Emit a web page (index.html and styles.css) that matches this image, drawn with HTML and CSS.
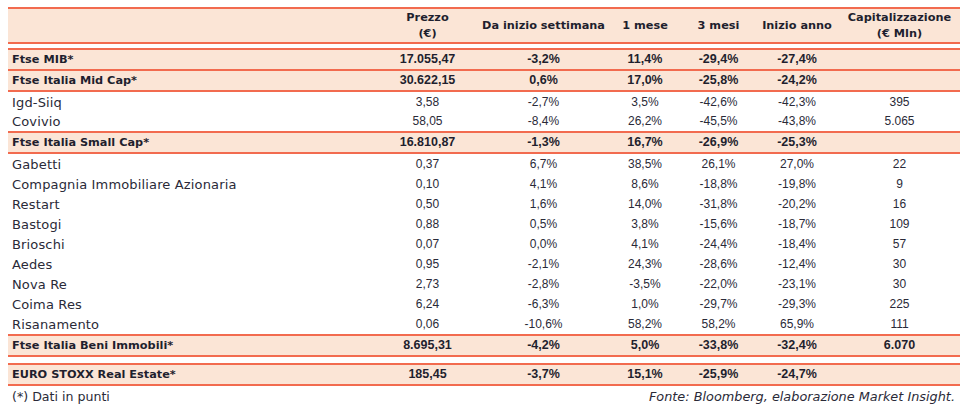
FILE: index.html
```html
<!DOCTYPE html>
<html lang="it">
<head>
<meta charset="utf-8">
<title>Indici e titoli immobiliari</title>
<link rel="stylesheet" href="styles.css">
</head>
<body>
<div class="wrap">
<table class="perf">
  <colgroup>
    <col class="c-name"><col class="c-price"><col class="c-week"><col class="c-m1"><col class="c-m3"><col class="c-ytd"><col class="c-cap">
  </colgroup>
  <thead>
    <tr class="hd">
      <th></th>
      <th>Prezzo<br>(€)</th>
      <th>Da inizio settimana</th>
      <th>1 mese</th>
      <th>3 mesi</th>
      <th>Inizio anno</th>
      <th>Capitalizzazione<br>(€ Mln)</th>
    </tr>
  </thead>
  <tbody>
    <tr class="gap gap-top"><td colspan="7"></td></tr>
    <tr class="idx"><td>Ftse MIB*</td><td>17.055,47</td><td>-3,2%</td><td>11,4%</td><td>-29,4%</td><td>-27,4%</td><td></td></tr>
    <tr class="idx"><td>Ftse Italia Mid Cap*</td><td>30.622,15</td><td>0,6%</td><td>17,0%</td><td>-25,8%</td><td>-24,2%</td><td></td></tr>
    <tr class="st"><td>Igd-Siiq</td><td>3,58</td><td>-2,7%</td><td>3,5%</td><td>-42,6%</td><td>-42,3%</td><td>395</td></tr>
    <tr class="st st-last"><td>Covivio</td><td>58,05</td><td>-8,4%</td><td>26,2%</td><td>-45,5%</td><td>-43,8%</td><td>5.065</td></tr>
    <tr class="idx"><td>Ftse Italia Small Cap*</td><td>16.810,87</td><td>-1,3%</td><td>16,7%</td><td>-26,9%</td><td>-25,3%</td><td></td></tr>
    <tr class="st"><td>Gabetti</td><td>0,37</td><td>6,7%</td><td>38,5%</td><td>26,1%</td><td>27,0%</td><td>22</td></tr>
    <tr class="st"><td>Compagnia Immobiliare Azionaria</td><td>0,10</td><td>4,1%</td><td>8,6%</td><td>-18,8%</td><td>-19,8%</td><td>9</td></tr>
    <tr class="st"><td>Restart</td><td>0,50</td><td>1,6%</td><td>14,0%</td><td>-31,8%</td><td>-20,2%</td><td>16</td></tr>
    <tr class="st"><td>Bastogi</td><td>0,88</td><td>0,5%</td><td>3,8%</td><td>-15,6%</td><td>-18,7%</td><td>109</td></tr>
    <tr class="st"><td>Brioschi</td><td>0,07</td><td>0,0%</td><td>4,1%</td><td>-24,4%</td><td>-18,4%</td><td>57</td></tr>
    <tr class="st"><td>Aedes</td><td>0,95</td><td>-2,1%</td><td>24,3%</td><td>-28,6%</td><td>-12,4%</td><td>30</td></tr>
    <tr class="st"><td>Nova Re</td><td>2,73</td><td>-2,8%</td><td>-3,5%</td><td>-22,0%</td><td>-23,1%</td><td>30</td></tr>
    <tr class="st"><td>Coima Res</td><td>6,24</td><td>-6,3%</td><td>1,0%</td><td>-29,7%</td><td>-29,3%</td><td>225</td></tr>
    <tr class="st"><td>Risanamento</td><td>0,06</td><td>-10,6%</td><td>58,2%</td><td>58,2%</td><td>65,9%</td><td>111</td></tr>
    <tr class="idx"><td>Ftse Italia Beni Immobili*</td><td>8.695,31</td><td>-4,2%</td><td>5,0%</td><td>-33,8%</td><td>-32,4%</td><td>6.070</td></tr>
    <tr class="gap gap-bot"><td colspan="7"></td></tr>
    <tr class="idx"><td>EURO STOXX Real Estate*</td><td>185,45</td><td>-3,7%</td><td>15,1%</td><td>-25,9%</td><td>-24,7%</td><td></td></tr>
  </tbody>
</table>
<div class="foot">
  <span class="note">(*) Dati in punti</span>
  <span class="src">Fonte: Bloomberg, elaborazione Market Insight.</span>
</div>
</div>
</body>
</html>
```

FILE: styles.css
```css
html, body {
  margin: 0;
  padding: 0;
  background: #ffffff;
}
body {
  padding: 7px 0 0 8px;
  font-family: "DejaVu Sans", "Liberation Sans", sans-serif;
  font-size: 12px;
  color: #1f1f2e;
}
.wrap {
  width: 952px;
}
.perf {
  width: 952px;
  border-collapse: collapse;
  table-layout: fixed;
}
.c-name { width: 368px; }
.c-price { width: 103px; }
.c-week { width: 129px; }
.c-m1 { width: 74px; }
.c-m3 { width: 73px; }
.c-ytd { width: 84px; }
.c-cap { width: 121px; }

.perf th, .perf td {
  padding: 0;
  text-align: center;
  white-space: nowrap;
  vertical-align: middle;
}
.perf td:first-child {
  text-align: left;
  padding-left: 4px;
  font-size: 13px;
  letter-spacing: 0.15px;
}
.perf td + td {
  font-family: "Liberation Sans", "DejaVu Sans", sans-serif;
  font-size: 12px;
}
.hd th {
  background: #fbe5d6;
  border-top: 2px solid #f26b4f;
  border-bottom: 2px solid #f26b4f;
  height: 32px;
  padding-top: 1px;
  font-weight: bold;
  font-size: 11.3px;
  line-height: 16px;
}
.gap td {
  padding: 0;
  border: none;
}
.gap-top td { height: 4px; }
.gap-bot td { height: 6px; }
.idx td {
  background: #fbe5d6;
  border-top: 2px solid #f26b4f;
  border-bottom: 2px solid #f26b4f;
  height: 19px;
  font-weight: bold;
  line-height: 15px;
}
.perf .idx td:first-child {
  font-size: 11.3px;
  letter-spacing: 0;
}
.perf .idx td + td {
  font-size: 12.5px;
}
.st td {
  height: 20px;
  line-height: 15px;
  color: #2a2a38;
}
.st-last td {
  height: 19px;
}
.foot {
  display: flex;
  justify-content: space-between;
  align-items: center;
  height: 20px;
  padding: 0 5px 0 4px;
  font-size: 12.6px;
  color: #2a2a38;
}
.src {
  font-style: italic;
  font-size: 12.85px;
}
```
